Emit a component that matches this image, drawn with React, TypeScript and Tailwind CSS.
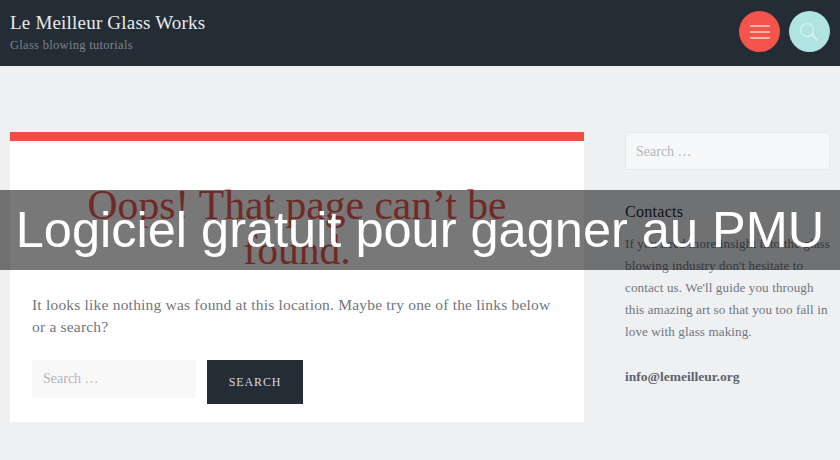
import React from "react";

const serif = "font-['Liberation_Serif',serif]";

const App: React.FC = () => {
  return (
    <div className={`relative h-[460px] w-[840px] overflow-hidden bg-[#eff0f2] ${serif}`}>
      {/* Header */}
      <header className="flex h-[66px] items-start justify-between bg-[#242c36] pl-[10px] pr-[10px]">
        <div>
          <h1 className="mt-[10px] text-[19px] leading-[26px] tracking-[0.2px] text-[#e8eaec]">
            Le Meilleur Glass Works
          </h1>
          <p className="mt-[1px] text-[12.5px] leading-[16px] tracking-[0.3px] text-[#7d838b]">
            Glass blowing tutorials
          </p>
        </div>
        <div className="mt-[11px] flex gap-[9px]">
          <button className="flex h-[41px] w-[41px] flex-col items-center justify-center gap-[4px] rounded-full bg-[#f4544a]">
            <span className="h-[2px] w-[20px] bg-[#fbb5ae]" />
            <span className="h-[2px] w-[20px] bg-[#fbb5ae]" />
            <span className="h-[2px] w-[20px] bg-[#fbb5ae]" />
          </button>
          <button className="flex h-[41px] w-[41px] items-center justify-center rounded-full bg-[#b0e4e3]">
            <svg width="22" height="22" viewBox="0 0 22 22" fill="none" stroke="#d3f0ef" strokeWidth="1.5">
              <circle cx="8" cy="9" r="6.5" />
              <path d="M12.8 13.8 L19 19.5" strokeWidth="2" />
            </svg>
          </button>
        </div>
      </header>

      <main className="flex items-start pl-[10px] pt-[66px]">
        {/* Not found card */}
        <section className="h-[290px] w-[574px] border-t-[9px] border-[#f04d43] bg-white px-[22px]">
          <h2 className="mt-[42px] px-[30px] text-center text-[41.6px] leading-[45px] text-[#ee5a50]">
            Oops! That page can’t be found.
          </h2>
          <p className="mt-[21px] text-[15.5px] leading-[22px] tracking-[0.2px] text-[#6f7680]">
            It looks like nothing was found at this location. Maybe try one of the links below or a search?
          </p>
          <div className="mt-[22px] flex items-start gap-[11px]">
            <div className="h-[38px] w-[164px] rounded-[3px] bg-[#f8f8f8] px-[11px] text-[14px] leading-[38px] text-[#b5b5b5]">
              Search …
            </div>
            <button className="h-[44px] w-[96px] bg-[#242c36] text-[12px] tracking-[0.9px] text-[#d9dce0]">
              SEARCH
            </button>
          </div>
        </section>

        {/* Sidebar */}
        <aside className="ml-[41px] w-[205px]">
          <div className="h-[38px] rounded-[3px] border border-[#e6e7e9] bg-[#f6f7f8] px-[10px] text-[14px] leading-[38px] text-[#b5b5b5]">
            Search …
          </div>
          <h3 className="mt-[32px] text-[16px] leading-[20px] tracking-[0.3px] text-[#242c36]">Contacts</h3>
          <p className="mr-[-4px] mt-[11px] text-[13.1px] leading-[22px] tracking-[0.1px] text-[#6f7680]">
            If you need more insight into the glass blowing industry don't hesitate to contact us. We'll guide you through this amazing art so that you too fall in love with glass making.
          </p>
          <p className="mt-[23px] text-[13.5px] font-bold leading-[22px] text-[#5c636d]">info@lemeilleur.org</p>
        </aside>
      </main>

      {/* Title overlay */}
      <div className="absolute left-0 top-[190px] flex h-[80px] w-full items-center justify-center bg-black/[.53] font-['Liberation_Sans',sans-serif] text-[50.5px] leading-[80px] text-white">
        Logiciel gratuit pour gagner au PMU
      </div>
    </div>
  );
};

export default App;
